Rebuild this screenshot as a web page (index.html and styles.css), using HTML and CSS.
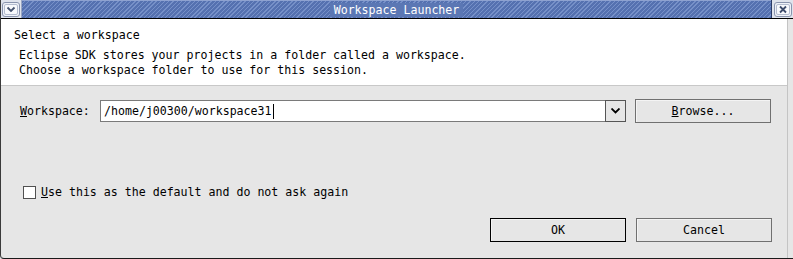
FILE: index.html
```html
<!DOCTYPE html>
<html lang="en">

<head>
    <link rel="stylesheet" href="styles.css">
    <meta charset="UTF-8">
    <title>Workspace Launcher</title>
</head>

<body>
    <div class="window">
        <div class="titlebar">
            <div class="tb-button">
                <svg width="18" height="15" viewBox="0 0 18 15">
                    <rect x="0.5" y="0.5" width="17" height="14" rx="2.5" fill="#eef1f7" stroke="#8a94ae" />
                    <rect x="2.5" y="2.5" width="13" height="10" rx="1.5" fill="#f8f9fc" stroke="#b4bccf" />
                    <path d="M5.5 5.5 L9 9 L12.5 5.5" fill="none" stroke="#45536f" stroke-width="1.8" />
                </svg>
            </div>
            <div class="tb-stripes">
                <span class="tb-title">Workspace Launcher</span>
            </div>
            <div class="tb-button tb-close">
                <svg width="18" height="15" viewBox="0 0 18 15">
                    <rect x="0.5" y="0.5" width="17" height="14" rx="2.5" fill="#eef1f7" stroke="#8a94ae" />
                    <rect x="2.5" y="2.5" width="13" height="10" rx="1.5" fill="#f8f9fc" stroke="#b4bccf" />
                    <path d="M6 4.5 L12 10.5 M12 4.5 L6 10.5" fill="none" stroke="#3e4c6c" stroke-width="1.8" />
                </svg>
            </div>
        </div>

        <div class="frame">
            <div class="panel">
                <div class="header">
                    <p class="header-title">Select a workspace</p>
                    <p class="header-desc">Eclipse SDK stores your projects in a folder called a workspace.<br>Choose a workspace folder to use for this session.</p>
                </div>

                <div class="row-workspace">
                    <label class="ws-label" for="wsInput"><u>W</u>orkspace:</label>
                    <div class="combo">
                        <div class="combo-text" id="wsInput">/home/j00300/workspace31<span class="caret"></span></div>
                        <div class="combo-arrow">
                            <svg width="9" height="6" viewBox="0 0 9 6">
                                <path d="M0.5 0.5 L4.5 4.5 L8.5 0.5" fill="none" stroke="#000" stroke-width="1.8" />
                            </svg>
                        </div>
                    </div>
                    <button class="btn"><u>B</u>rowse...</button>
                </div>

                <div class="row-check">
                    <span class="checkbox"></span>
                    <span><u>U</u>se this as the default and do not ask again</span>
                </div>

                <div class="row-buttons">
                    <button class="btn btn-default">OK</button>
                    <button class="btn">Cancel</button>
                </div>
            </div>
            <div class="side"></div>
        </div>
    </div>
</body>

</html>
```

FILE: styles.css
```css
body {
    margin: 0;
    font-family: "DejaVu Sans Mono", "Liberation Mono", monospace;
    font-size: 11.6px;
    color: #000000;
    background-color: #e6e6e6;
}

p {
    margin: 0;
}

.window {
    width: 792px;
    height: 258px;
    border-left: 1px solid #3a3a3a;
    border-bottom: 1px solid #1a1a1a;
    border-bottom-left-radius: 4px;
    display: flex;
    flex-direction: column;
    overflow: hidden;
}

/* title bar */
.titlebar {
    height: 18px;
    display: flex;
    border-bottom: 1px solid #000000;
    background-color: #e8ebf2;
}

.tb-button {
    width: 21px;
    height: 18px;
    display: flex;
    align-items: center;
    justify-content: center;
    background-color: #dfe3ec;
    border-right: 1px solid #9aa6c2;
    box-sizing: border-box;
}

.tb-close {
    border-right: none;
    border-left: 1px solid #2a3a66;
    width: 22px;
}

.tb-stripes {
    flex: 1;
    display: flex;
    align-items: center;
    justify-content: center;
    background-color: #5571b0;
    background-image: repeating-linear-gradient(-45deg,
            #5571b0 0px,
            #5571b0 2px,
            #7690c8 2px,
            #7690c8 3px);
    border-top: 1px solid #8ea2d0;
}

.tb-title {
    color: #ffffff;
    font-size: 11.6px;
    padding: 0 4px;
    background-color: #5b77b4;
    line-height: 14px;
}

/* body */
.frame {
    flex: 1;
    display: flex;
}

.panel {
    flex: 1;
    display: flex;
    flex-direction: column;
    border-right: 1px solid #c4c4c4;
}

.side {
    width: 5px;
}

.header {
    background-color: #ffffff;
    height: 67px;
    box-sizing: border-box;
    border-bottom: 1px solid #c8c8c8;
    padding: 9px 13px 0;
    line-height: 15px;
}

.header-desc {
    margin-top: 5px;
    padding-left: 5px;
}

.row-workspace {
    display: flex;
    align-items: center;
    height: 24px;
    margin-top: 13px;
    padding-left: 19px;
}

.ws-label {
    width: 80px;
}

.combo {
    display: flex;
    width: 526px;
    height: 22px;
    margin-right: 9px;
}

.combo-text {
    flex: 1;
    display: flex;
    align-items: center;
    background-color: #ffffff;
    border: 1px solid #7a7a7a;
    border-right: none;
    padding-left: 3px;
}

.caret {
    display: inline-block;
    width: 1px;
    height: 15px;
    background-color: #000000;
    margin-left: 1px;
}

.combo-arrow {
    width: 21px;
    display: flex;
    align-items: center;
    justify-content: center;
    border: 1px solid #555555;
    background-color: #e6e6e6;
    box-sizing: border-box;
}

.btn {
    width: 136px;
    height: 24px;
    font-family: inherit;
    font-size: inherit;
    color: #000000;
    background-color: #e6e6e6;
    border: 1px solid #707070;
    box-shadow: inset 1px 1px 0 #f4f4f4;
    padding: 0;
}

.btn-default {
    border-color: #000000;
}

.row-check {
    display: flex;
    align-items: center;
    height: 16px;
    margin-top: 61px;
    padding-left: 22px;
}

.checkbox {
    width: 11px;
    height: 11px;
    border: 1px solid #505050;
    background-color: #ffffff;
    margin-right: 5px;
}

.row-buttons {
    display: flex;
    justify-content: flex-end;
    gap: 10px;
    margin-top: 18px;
    padding-right: 15px;
}
```
